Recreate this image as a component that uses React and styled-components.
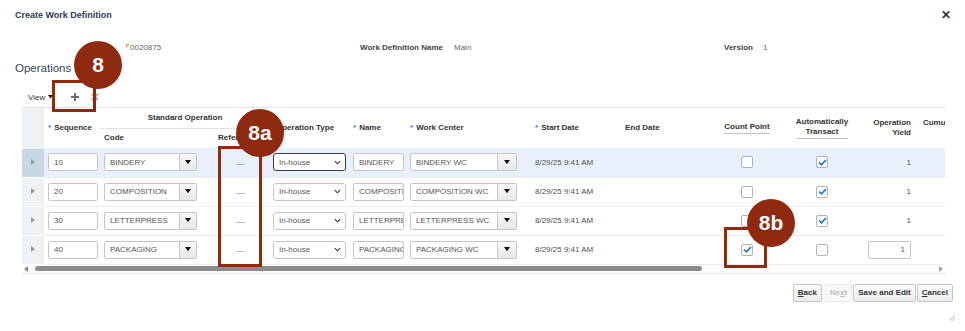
import React from 'react';
import styled, { createGlobalStyle } from 'styled-components';

const GlobalStyle = createGlobalStyle`
  html, body {
    margin: 0;
    padding: 0;
    background: #fff;
  }
  body {
    font-family: "Liberation Sans", Arial, sans-serif;
    color: #333;
  }
`;

const Dialog = styled.div`
  position: relative;
  width: 965px;
  height: 331px;
  overflow: hidden;
  background: #fff;
`;

const TitleBar = styled.div`
  display: flex;
  align-items: center;
  justify-content: space-between;
  height: 30px;
  padding: 0 14px 0 15px;
`;

const Title = styled.h1`
  margin: 0;
  font-size: 9px;
  font-weight: bold;
  color: #2c3b53;
`;

const Close = styled.span`
  font-size: 12px;
  font-weight: bold;
  color: #333;
  line-height: 1;
`;

const InfoRow = styled.div`
  display: grid;
  grid-template-columns: 234px 364px auto;
  margin-top: 12px;
  padding-left: 126px;
  height: 12px;
  line-height: 12px;
  font-size: 8px;
  color: #666;
`;

const Field = styled.div`
  display: flex;
  gap: ${p => p.$gap || 10}px;
`;

const FieldLabel = styled.span`
  font-weight: bold;
  color: #444;
`;

const Changed = styled.span`
  position: relative;
  padding-left: 4px;
  &::before {
    content: '';
    position: absolute;
    left: 0;
    top: 2px;
    border-top: 4px solid #f29b61;
    border-right: 4px solid transparent;
  }
`;

const SectionTitle = styled.h2`
  margin: 7px 0 0 15px;
  font-size: 11.5px;
  line-height: 14px;
  font-weight: normal;
  color: #34435a;
`;

const Toolbar = styled.div`
  display: flex;
  align-items: center;
  height: 16px;
  margin-top: 14px;
  padding-left: 28px;
  font-size: 8px;
  color: #333;
`;

const ViewMenu = styled.span`
  display: flex;
  align-items: center;
  gap: 3px;
  margin-right: 17px;
`;

const ToolIcon = styled.span`
  display: flex;
  width: 10px;
  height: 10px;
  margin-right: 10px;
`;

const TableWrap = styled.div`
  width: 923px;
  margin: 2px 0 0 22px;
  border-top: 1px solid #e3e3e3;
  border-bottom: 1px solid #e6e6e6;
  overflow: hidden;
`;

const Table = styled.table`
  table-layout: fixed;
  border-collapse: collapse;
  width: ${p => p.$w}px;
  font-size: 8px;
`;

const Col = styled.col`
  width: ${p => p.$w}px;
`;

const HeadRow = styled.tr`
  height: 20px;
`;

const Th = styled.th`
  padding: 0 ${p => p.$pr ?? 2}px 0 ${p => p.$pl ?? 4}px;
  text-align: ${p => p.$align || 'left'};
  vertical-align: middle;
  font-weight: bold;
  color: #333;
  line-height: 10px;
  white-space: nowrap;
  overflow: hidden;
`;

const GroupTh = styled(Th)`
  text-align: center;
  border-bottom: 1px solid #e2e2e2;
`;

const GutterCell = styled.td`
  background: ${p => (p.$selected ? '#c8d7e4' : '#eff2f5')};
  border-bottom: 1px solid ${p => (p.$head ? '#eff2f5' : '#fff')};
  text-align: center;
  padding: 0;
`;

const Star = styled.span`
  color: #2a7bd2;
  margin-right: 3px;
  font-weight: bold;
`;

const Underlined = styled.span`
  display: inline-block;
  border-bottom: 1px solid #c2c2c2;
  padding-bottom: 1px;
`;

const Row = styled.tr`
  height: 29px;
  background: ${p => (p.$selected ? '#e8f1fb' : '#fff')};
`;

const Td = styled.td`
  padding: 0 ${p => p.$pr ?? 0}px 0 ${p => p.$pl ?? 4}px;
  border-bottom: 1px solid #ededed;
  vertical-align: middle;
  text-align: ${p => p.$align || 'left'};
  color: #4d4d4d;
  white-space: nowrap;
  overflow: hidden;
`;

const TextBox = styled.div`
  display: flex;
  align-items: center;
  justify-content: ${p => (p.$right ? 'flex-end' : 'flex-start')};
  box-sizing: border-box;
  width: ${p => p.$w}px;
  height: 18px;
  padding: 0 5px;
  border: 1px solid #c6c6c6;
  border-radius: 2px;
  background: #fff;
  color: #555;
  overflow: hidden;
  white-space: nowrap;
  margin-left: ${p => (p.$right ? 'auto' : '0')};
`;

const Combo = styled.div`
  display: flex;
  width: ${p => p.$w}px;
`;

const ComboText = styled(TextBox)`
  flex: 1;
  border-radius: 2px 0 0 2px;
`;

const ComboButton = styled.div`
  display: flex;
  align-items: center;
  justify-content: center;
  box-sizing: border-box;
  width: ${p => p.$w}px;
  height: 18px;
  border: 1px solid #c6c6c6;
  border-left: none;
  border-radius: 0 2px 2px 0;
  background: linear-gradient(#f6f6f6, #e9e9e9);
`;

const SelectBox = styled.div`
  display: flex;
  align-items: center;
  justify-content: space-between;
  box-sizing: border-box;
  width: 73px;
  height: 18px;
  padding: 0 4px 0 5px;
  border: 1px solid ${p => (p.$focused ? '#3a3a3a' : '#c6c6c6')};
  border-radius: 3px;
  background: #fff;
  color: #555;
`;

const Dash = styled.span`
  display: inline-block;
  width: 9px;
  height: 1px;
  background: #bdbdbd;
  vertical-align: middle;
  margin-top: 4px;
`;

const CheckBox = styled.span`
  display: inline-flex;
  align-items: center;
  justify-content: center;
  box-sizing: border-box;
  width: 12px;
  height: 12px;
  border: 1px solid #b2b2b2;
  border-radius: 2px;
  background: #fff;
  vertical-align: middle;
`;

const ScrollRow = styled.div`
  display: flex;
  align-items: center;
  height: 8px;
`;

const ArrowLeft = styled.span`
  width: 0;
  height: 0;
  margin: 0 4px 0 2px;
  border-top: 3px solid transparent;
  border-bottom: 3px solid transparent;
  border-right: 4px solid #8a8a8a;
`;

const ArrowRight = styled.span`
  width: 0;
  height: 0;
  margin: 0 2px 0 4px;
  border-top: 3px solid transparent;
  border-bottom: 3px solid transparent;
  border-left: 4px solid #a0a0a0;
`;

const Track = styled.div`
  flex: 1;
  padding-left: 3px;
`;

const Thumb = styled.div`
  width: 667px;
  height: 5px;
  border-radius: 3px;
  background: #8c8c8c;
`;

const ButtonBar = styled.div`
  display: flex;
  justify-content: flex-end;
  gap: 1px;
  margin-top: 10px;
  padding-right: 12px;
`;

const Button = styled.button`
  box-sizing: border-box;
  height: 18px;
  margin-right: ${p => p.$gapAfter ?? 0}px;
  padding: 0 4px;
  border: 1px solid ${p => (p.disabled ? '#ececec' : '#c5c5c5')};
  border-radius: 2px;
  background: ${p => (p.disabled ? '#f7f8f9' : 'linear-gradient(#fbfbfb, #ececec)')};
  font-family: "Liberation Sans", Arial, sans-serif;
  font-size: 8px;
  font-weight: bold;
  color: ${p => (p.disabled ? '#bbb' : '#333')};
  u {
    text-decoration: underline;
  }
`;

const GripRow = styled.div`
  display: flex;
  justify-content: flex-end;
  margin-top: 13px;
  padding-right: 10px;
`;

const Callout = styled.div`
  position: absolute;
  left: ${p => p.$x}px;
  top: ${p => p.$y}px;
  width: 48px;
  height: 48px;
  border-radius: 50%;
  background: #8e2a0f;
  color: #fff;
  display: flex;
  align-items: center;
  justify-content: center;
  font-family: "Liberation Sans", Arial, sans-serif;
  font-size: 21px;
  font-weight: bold;
  z-index: 3;
`;

const Frame = styled.div`
  position: absolute;
  left: ${p => p.$x}px;
  top: ${p => p.$y}px;
  width: ${p => p.$w}px;
  height: ${p => p.$h}px;
  box-sizing: border-box;
  border: 3px solid #8e2a0f;
  z-index: 2;
`;

const DownTriangle = ({ size = 6, color = '#111' }) => (
  <svg width={size} height={size * 0.7} viewBox="0 0 10 7">
    <path d="M0 0 L10 0 L5 7 Z" fill={color} />
  </svg>
);

const Chevron = () => (
  <svg width="7" height="5" viewBox="0 0 8 5">
    <path d="M1 1 L4 4 L7 1" fill="none" stroke="#333" strokeWidth="1.3" />
  </svg>
);

const Expander = () => (
  <svg width="4" height="6" viewBox="0 0 4 6">
    <path d="M0 0 L4 3 L0 6 Z" fill="#9a9a9a" />
  </svg>
);

const Check = () => (
  <svg width="9" height="7" viewBox="0 0 9 7">
    <path d="M1 3.5 L3.4 5.8 L8 1" fill="none" stroke="#1f6fc5" strokeWidth="1.6" />
  </svg>
);

const operations = [
  { seq: '10', code: 'BINDERY', name: 'BINDERY', wc: 'BINDERY WC', count: false, auto: true, yieldInput: false },
  { seq: '20', code: 'COMPOSITION', name: 'COMPOSITION', wc: 'COMPOSITION WC', count: false, auto: true, yieldInput: false },
  { seq: '30', code: 'LETTERPRESS', name: 'LETTERPRESS', wc: 'LETTERPRESS WC', count: false, auto: true, yieldInput: false },
  { seq: '40', code: 'PACKAGING', name: 'PACKAGING', wc: 'PACKAGING WC', count: true, auto: false, yieldInput: true },
];

const colWidths = [22, 56, 112, 56, 81, 57, 124, 90, 80, 94, 56, 66, 60];
const tableWidth = colWidths.reduce((a, b) => a + b, 0);

export default function App() {
  return (
    <Dialog>
      <GlobalStyle />
      <TitleBar>
        <Title>Create Work Definition</Title>
        <Close>✕</Close>
      </TitleBar>

      <InfoRow>
        <Changed>0020875</Changed>
        <Field $gap={11}>
          <FieldLabel>Work Definition Name</FieldLabel>
          <span>Main</span>
        </Field>
        <Field>
          <FieldLabel>Version</FieldLabel>
          <span>1</span>
        </Field>
      </InfoRow>

      <SectionTitle>Operations</SectionTitle>

      <Toolbar>
        <ViewMenu>
          View <DownTriangle size={5} />
        </ViewMenu>
        <ToolIcon>
          <svg width="10" height="10" viewBox="0 0 10 10">
            <path d="M5 1 V9 M1 5 H9" stroke="#6f6f6f" strokeWidth="2" />
          </svg>
        </ToolIcon>
        <ToolIcon>
          <svg width="10" height="10" viewBox="0 0 10 10">
            <path d="M2 2 L8 8 M8 2 L2 8" stroke="#a9a9a9" strokeWidth="1.8" />
          </svg>
        </ToolIcon>
      </Toolbar>

      <TableWrap>
        <Table $w={tableWidth}>
          <colgroup>
            {colWidths.map((w, i) => (
              <Col key={i} $w={w} />
            ))}
          </colgroup>
          <thead>
            <HeadRow>
              <GutterCell rowSpan={2} $head />
              <Th rowSpan={2}><Star>*</Star>Sequence</Th>
              <GroupTh colSpan={2}>Standard Operation</GroupTh>
              <Th rowSpan={2} $pl={8}>Operation Type</Th>
              <Th rowSpan={2}><Star>*</Star>Name</Th>
              <Th rowSpan={2}><Star>*</Star>Work Center</Th>
              <Th rowSpan={2} $pl={5}><Star>*</Star>Start Date</Th>
              <Th rowSpan={2} $pl={5}>End Date</Th>
              <Th rowSpan={2} $align="center" $pl={0} $pr={0}><Underlined>Count Point</Underlined></Th>
              <Th rowSpan={2} $align="center" $pl={0} $pr={0}>
                <Underlined>Automatically<br />Transact</Underlined>
              </Th>
              <Th rowSpan={2} $align="right" $pr={5}>Operation<br />Yield</Th>
              <Th rowSpan={2} $align="right" $pr={10} $pl={0}>Cumulative<br />Yield</Th>
            </HeadRow>
            <HeadRow>
              <Th>Code</Th>
              <Th $pl={6}>Reference</Th>
            </HeadRow>
          </thead>
          <tbody>
            {operations.map((op, i) => (
              <Row key={op.seq} $selected={i === 0}>
                <GutterCell $selected={i === 0}><Expander /></GutterCell>
                <Td><TextBox $w={50}>{op.seq}</TextBox></Td>
                <Td>
                  <Combo $w={93}>
                    <ComboText>{op.code}</ComboText>
                    <ComboButton $w={17}><DownTriangle /></ComboButton>
                  </Combo>
                </Td>
                <Td $align="center" $pl={0}><Dash /></Td>
                <Td $pl={5}>
                  <SelectBox $focused={i === 0}>
                    In-house <Chevron />
                  </SelectBox>
                </Td>
                <Td><TextBox $w={51}>{op.name}</TextBox></Td>
                <Td>
                  <Combo $w={107}>
                    <ComboText>{op.wc}</ComboText>
                    <ComboButton $w={19}><DownTriangle /></ComboButton>
                  </Combo>
                </Td>
                <Td $pl={5}>8/29/25 9:41 AM</Td>
                <Td />
                <Td $align="center" $pl={0}>
                  <CheckBox>{op.count && <Check />}</CheckBox>
                </Td>
                <Td $align="center" $pl={0}>
                  <CheckBox>{op.auto && <Check />}</CheckBox>
                </Td>
                <Td $align="right" $pr={5}>
                  {op.yieldInput ? <TextBox $w={43} $right>1</TextBox> : '1'}
                </Td>
                <Td />
              </Row>
            ))}
          </tbody>
        </Table>
        <ScrollRow>
          <ArrowLeft />
          <Track><Thumb /></Track>
          <ArrowRight />
        </ScrollRow>
      </TableWrap>

      <ButtonBar>
        <Button $gapAfter={2}><u>B</u>ack</Button>
        <Button disabled>Ne<u>x</u>t</Button>
        <Button>Save and Edit</Button>
        <Button><u>C</u>ancel</Button>
      </ButtonBar>

      <GripRow>
        <svg width="6" height="6" viewBox="0 0 6 6">
          <path d="M6 0 L0 6 M6 3 L3 6" stroke="#bbb" strokeWidth="1" />
        </svg>
      </GripRow>

      <Frame $x={52} $y={80} $w={44} $h={32} />
      <Callout $x={74} $y={41}>8</Callout>

      <Frame $x={218} $y={146} $w={44} $h={121} />
      <Callout $x={236} $y={109}>8a</Callout>

      <Frame $x={724} $y={227} $w={43} $h={41} />
      <Callout $x={747} $y={199}>8b</Callout>
    </Dialog>
  );
}
